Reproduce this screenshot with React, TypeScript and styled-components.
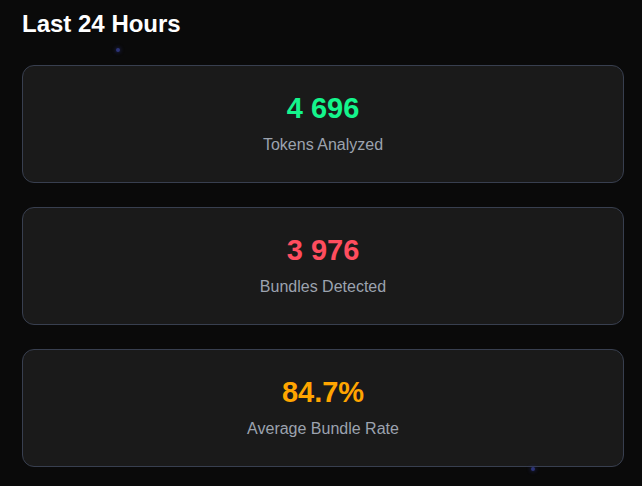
import React from "react"
import styled, { createGlobalStyle } from "styled-components"

const GlobalStyle = createGlobalStyle`
  html, body {
    margin: 0;
    padding: 0;
    background: #0a0a0a;
  }
  body {
    font-family: "Liberation Sans", Arial, sans-serif;
  }
`

const Page = styled.div`
  position: relative;
  width: 642px;
  height: 486px;
  overflow: hidden;
  padding: 10px 18px 0 22px;
  box-sizing: border-box;
  background: #0a0a0a;
`

const Title = styled.h2`
  margin: 0 0 27px;
  font-size: 24px;
  line-height: 28px;
  font-weight: 700;
  color: #ffffff;
`

const List = styled.div`
  display: flex;
  flex-direction: column;
  gap: 24px;
`

const Card = styled.div`
  height: 118px;
  box-sizing: border-box;
  border: 1px solid #383f4f;
  border-radius: 12px;
  background: #1a1a1a;
  display: flex;
  flex-direction: column;
  align-items: center;
  justify-content: center;
  gap: 12px;
  padding-bottom: 2px;
`

const Value = styled.div<{ $color: string }>`
  font-size: 29px;
  line-height: 32px;
  font-weight: 700;
  color: ${(p) => p.$color};
`

const Label = styled.div`
  font-size: 16px;
  line-height: 18px;
  color: #9ca3af;
`

const Dot = styled.span<{ $x: number; $y: number }>`
  position: absolute;
  left: ${(p) => p.$x}px;
  top: ${(p) => p.$y}px;
  width: 4px;
  height: 4px;
  border-radius: 50%;
  background: #2c3378;
  box-shadow: 0 0 4px #2c3378;
`

const stats = [
  { value: "4 696", label: "Tokens Analyzed", color: "#14f58c" },
  { value: "3 976", label: "Bundles Detected", color: "#ff4d5e" },
  { value: "84.7%", label: "Average Bundle Rate", color: "#ffa500" },
]

export default function App() {
  return (
    <>
      <GlobalStyle />
      <Page>
        <Title>Last 24 Hours</Title>
        <List>
          {stats.map((s) => (
            <Card key={s.label}>
              <Value $color={s.color}>{s.value}</Value>
              <Label>{s.label}</Label>
            </Card>
          ))}
        </List>
        <Dot $x={116} $y={48} />
        <Dot $x={531} $y={467} />
      </Page>
    </>
  )
}
